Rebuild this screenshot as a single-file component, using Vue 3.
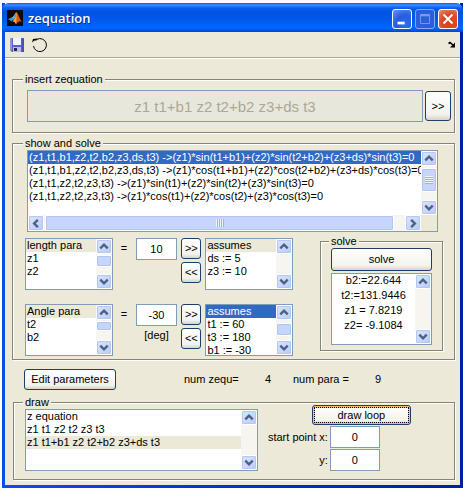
<script setup>
import { h, ref } from 'vue'

const chevrons = {
  up: 'M4 10 8 6l4 4',
  down: 'M4 6 8 10l4-4',
  left: 'M10 4 6 8l4 4',
  right: 'M6 4 10 8l-4 4',
}

const arrow = (dir) =>
  h('button', { type: 'button', class: 'lb-arrow', 'aria-label': `Scroll ${dir}` }, [
    h('svg', { viewBox: '1 1 14 14' }, [h('path', { d: chevrons[dir] })]),
  ])

// track = [space before, thumb length, space after]
const bar = (track, axis) =>
  h('div', { class: ['lb-bar', `lb-bar-${axis}`] }, [
    arrow(axis === 'y' ? 'up' : 'left'),
    h('div', { class: 'lb-track' }, track
      ? [
          h('i', { style: { flexGrow: track[0] } }),
          h('i', { class: ['lb-thumb', { 'lb-grip': track[1] > 20 }], style: { flexGrow: track[1] } }),
          h('i', { style: { flexGrow: track[2] } }),
        ]
      : []),
    arrow(axis === 'y' ? 'down' : 'right'),
  ])

const ListBox = (props) =>
  h('div', { class: ['lb', `lb-${props.tone}`] }, [
    h('div', { class: 'lb-main' }, [
      h('select', { size: 4, 'aria-label': props.label },
        props.items.map((text, i) => h('option', { selected: i === props.selected }, text))),
      bar(props.track, 'y'),
    ]),
    props.trackX ? h('div', { class: 'lb-foot' }, [bar(props.trackX, 'x')]) : null,
  ])
ListBox.props = ['items', 'selected', 'tone', 'track', 'trackX', 'label']

const zequation = ref('z1 t1+b1 z2 t2+b2 z3+ds t3')
const lengthValue = ref('10')
const angleValue = ref('-30')
const startX = ref('0')
const startY = ref('0')

const equations = [
  '(z1,t1,b1,z2,t2,b2,z3,ds,t3) ->(z1)*sin(t1+b1)+(z2)*sin(t2+b2)+(z3+ds)*sin(t3)=0',
  '(z1,t1,b1,z2,t2,b2,z3,ds,t3) ->(z1)*cos(t1+b1)+(z2)*cos(t2+b2)+(z3+ds)*cos(t3)=0',
  '(z1,t1,z2,t2,z3,t3) ->(z1)*sin(t1)+(z2)*sin(t2)+(z3)*sin(t3)=0',
  '(z1,t1,z2,t2,z3,t3) ->(z1)*cos(t1)+(z2)*cos(t2)+(z3)*cos(t3)=0',
]
const lengthPara = ['length para', 'z1', 'z2']
const lengthAssumes = ['assumes', 'ds := 5', 'z3 := 10']
const anglePara = ['Angle para', 't2', 'b2']
const angleAssumes = ['assumes', 't1 := 60', 't3 := 180', 'b1 := -30']
const solution = ['b2:=22.644', 't2:=131.9446', 'z1 = 7.8219', 'z2= -9.1084']
const loops = ['z equation', 'z1 t1 z2 t2 z3 t3', 'z1 t1+b1 z2 t2+b2 z3+ds t3']
</script>

<template>
  <div class="window">
    <header class="title">
      <svg class="logo" viewBox="0 0 16 16" aria-hidden="true">
        <rect width="16" height="16" fill="#0b0a12" />
        <path d="M1 9 4.500 7.500 6.500 9.500 4.500 11.500Z" fill="#3c8fc4" />
        <path d="M4.500 7.500C7 6.500 7.500 3.500 9.500 2L8.500 7 6.500 10Z" fill="#5fb0d0" />
        <path d="M9.500 2C11 3 12 8 15 12 13 10.500 11.500 11 9 14.500 8.500 12.500 7.500 11.500 5.500 12L8 8Z" fill="#d9541a" />
        <path d="M9.500 2C10 5 9.500 9 9 14.500 8.500 12.500 7.500 11.500 6 11.500L8.500 7Z" fill="#f7a63a" />
      </svg>
      <h1>zequation</h1>
      <button type="button" class="cap" aria-label="Minimize">
        <svg viewBox="0 0 20 20"><rect x="5" y="13" width="8" height="3" fill="#fff" /></svg>
      </button>
      <button type="button" class="cap dim" aria-label="Maximize">
        <svg viewBox="0 0 20 20"><path d="M5 5h10v10H5z" fill="none" stroke="#7d9bee" /><path d="M5 6h10" stroke="#7d9bee" stroke-width="2" /></svg>
      </button>
      <button type="button" class="cap close" aria-label="Close">
        <svg viewBox="0 0 20 20"><path d="m5 5 10 10m0-10-10 10" stroke="#fff" stroke-width="2.200" /></svg>
      </button>
    </header>

    <div class="toolbar">
      <button type="button" class="tool" aria-label="Save">
        <svg viewBox="0 0 16 16">
          <path d="M1 1h14v14H3l-2-2z" fill="#5a5fc0" />
          <path d="M1 1h2v12H1z" fill="#8c95e0" />
          <path d="M13 2h2v13h-2z" fill="#4a50ac" />
          <path d="M4 1h8v7H4z" fill="#eef3ff" />
          <path d="M4 10h8v5H4z" fill="#b9bfd8" />
          <path d="M5 11h3v3H5z" fill="#22265c" />
        </svg>
      </button>
      <button type="button" class="tool" aria-label="Rotate">
        <svg viewBox="0 0 16 16">
          <path d="M1.500 9A6.500 6.500 0 1 0 5 2.300" fill="none" stroke="#000" />
          <path d="M0 5.500 1 2l4.500-.500L4.500 3.500 2.500 3.500Z" fill="#000" />
        </svg>
      </button>
      <svg class="dock" viewBox="0 0 8 8" aria-hidden="true">
        <path d="M0.500 2.500 2 1.500 5.500 4.500" fill="none" stroke="#000" stroke-width="1.600" />
        <path d="M7 1.500V6.500H2z" fill="#000" />
      </svg>
    </div>

    <main>
      <fieldset>
        <legend>insert zequation</legend>
        <div class="insert">
          <input v-model="zequation" class="big" disabled aria-label="zequation" />
          <button type="button" class="btn">&gt;&gt;</button>
        </div>
      </fieldset>

      <fieldset class="show">
        <legend>show and solve</legend>
        <div class="equations">
          <ListBox label="equations" :items="equations" :selected="0" tone="blue" :track="[2, 24, 8]" :track-x="[1, 348, 11]" />
        </div>
        <div class="params">
          <div class="rows">
            <div class="row">
              <ListBox label="length parameters" :items="lengthPara" :selected="0" tone="beige" :track="[1, 11, 7]" />
              <label for="len" class="eq">=</label>
              <div class="value"><input id="len" v-model="lengthValue" /></div>
              <div class="pair">
                <button type="button" class="btn">&gt;&gt;</button>
                <button type="button" class="btn">&lt;&lt;</button>
              </div>
              <ListBox label="length assumes" :items="lengthAssumes" :selected="0" tone="beige" />
            </div>
            <div class="row">
              <ListBox label="angle parameters" :items="anglePara" :selected="0" tone="beige" :track="[1, 9, 9]" />
              <label for="ang" class="eq">=</label>
              <div class="value"><input id="ang" v-model="angleValue" /><span>[deg]</span></div>
              <div class="pair">
                <button type="button" class="btn">&gt;&gt;</button>
                <button type="button" class="btn">&lt;&lt;</button>
              </div>
              <ListBox label="angle assumes" :items="angleAssumes" :selected="0" tone="blue" :track="[3, 12, 4]" />
            </div>
          </div>
          <fieldset class="solve">
            <legend>solve</legend>
            <button type="button" class="btn">solve</button>
            <ListBox class="centered" label="solution" :items="solution" :selected="-1" tone="none" />
          </fieldset>
        </div>
      </fieldset>

      <div class="summary">
        <button type="button" class="btn">Edit parameters</button>
        <span>num zequ=</span><span>4</span>
        <span>num para =</span><span>9</span>
      </div>

      <fieldset class="draw">
        <legend>draw</legend>
        <div class="drawing">
          <ListBox label="loops" :items="loops" :selected="2" tone="beige" />
          <div class="start">
            <button type="button" class="btn focus">draw loop</button>
            <label for="sx">start point x:</label><input id="sx" v-model="startX" />
            <label for="sy">y:</label><input id="sy" v-model="startY" />
          </div>
        </div>
      </fieldset>
    </main>
  </div>
</template>

<style>
body {
  background: #fdfefd;
}

.lb {
  display: flex;
  flex-direction: column;
  box-sizing: border-box;
  min-width: 0;
  border: 1px solid #7f9db9;
  background: #fff;
}
.lb-main {
  display: flex;
  flex: 1;
  min-height: 0;
}
.lb select {
  flex: 1;
  width: 0;
  min-width: 0;
  height: 100%;
  margin: 0;
  padding: 0;
  border: 0;
  border-radius: 0;
  outline: 0;
  overflow: hidden;
  background: #fff;
  font: 11px/13px "Liberation Sans", Arial, sans-serif;
  color: #000;
}
.lb option {
  height: 13px;
  min-height: 13px;
  padding: 0 1px;
  line-height: 13px;
  white-space: pre;
}
.lb-blue option:checked {
  background: linear-gradient(#316ac5, #316ac5);
  -webkit-text-fill-color: #fff;
}
.lb-beige option:checked {
  background: linear-gradient(#ece9d8, #ece9d8);
  -webkit-text-fill-color: #000;
}
.lb-none option:checked {
  background: linear-gradient(#fff, #fff);
  -webkit-text-fill-color: #000;
}
.lb-foot {
  padding-right: 16px;
  background: #ece9d8;
}
.lb-bar {
  display: flex;
  flex: none;
  background: #f6f5f0;
}
.lb-bar-y {
  flex-direction: column;
  width: 16px;
}
.lb-bar-x {
  height: 16px;
}
.lb-arrow {
  flex: none;
  box-sizing: border-box;
  width: 16px;
  height: 15px;
  padding: 0;
  border: 1px solid #fff;
  border-radius: 2px;
  background: linear-gradient(135deg, #dbe5fe, #b8cbf8);
  box-shadow: inset 0 0 0 1px #b5c8f5;
}
.lb-bar-x .lb-arrow {
  height: 16px;
}
.lb-arrow svg {
  display: block;
  width: 14px;
  height: 13px;
}
.lb-arrow path {
  fill: none;
  stroke: #4d6185;
  stroke-width: 2.6;
}
.lb-track {
  display: flex;
  flex: 1;
  min-height: 0;
}
.lb-bar-y .lb-track {
  flex-direction: column;
}
.lb-track i {
  flex-basis: 0;
}
.lb-thumb {
  display: flex;
  box-sizing: border-box;
  align-items: center;
  justify-content: center;
  border: 1px solid #fff;
  border-radius: 2px;
  background: #c5d5fd;
  box-shadow: inset 0 0 0 1px #b2c5f3;
}
.lb-grip::after {
  content: "";
  width: 8px;
  height: 8px;
  background: repeating-linear-gradient(#eef4fe 0 1px, #9cb3ea 1px 2px);
}
.lb-bar-x .lb-grip::after {
  background: repeating-linear-gradient(90deg, #eef4fe 0 1px, #9cb3ea 1px 2px);
}
.centered select {
  text-align: center;
}
.centered option {
  height: 15px;
  padding: 0;
  line-height: 15px;
}
</style>

<style scoped>
.window {
  margin: 3px 2px;
  border: solid #0831d9;
  border-width: 0 3px 3px;
  border-image: linear-gradient(90deg, #0a4fe8, #0a2fc4 50%, #001fa0) 3;
  border-radius: 7px 7px 0 0;
  background: #ece9d8;
  font: 11px/13px "Liberation Sans", Arial, sans-serif;
  color: #000;
}
button,
input {
  box-sizing: border-box;
  margin: 0;
  padding: 0;
  font: inherit;
  color: #000;
}
.title {
  display: flex;
  align-items: center;
  gap: 3px;
  height: 29px;
  margin: 0 -3px;
  padding: 0 5px;
  box-sizing: border-box;
  border-radius: 7px 7px 0 0;
  background: linear-gradient(#0a5be6 0, #3a8cff 2px, #0a5ff0 5px, #0053e0 9px, #0058ea 16px, #0066ff 24px, #0062f8 26px, #0045c8 29px);
}
.logo {
  width: 16px;
  height: 16px;
}
h1 {
  flex: 1;
  margin: 0 0 0 2px;
  font: 600 13px/16px "Open Sans", "Noto Sans", sans-serif;
  color: #fff;
  text-shadow: 1px 1px 0 #0a2f94;
}
.cap {
  width: 20px;
  height: 20px;
  margin-top: 2px;
  border: 1px solid #fff;
  border-radius: 3px;
  background: radial-gradient(circle at 70% 80%, #2a6cf4, #2a5ce0 50%, #6b95f5);
}
.cap svg {
  display: block;
  width: 18px;
  height: 18px;
}
.dim {
  border-color: #88a8f2;
  background: #2a5ee0;
}
.close {
  background: radial-gradient(circle at 60% 70%, #e2431c, #dc4a26 50%, #f08f72);
}
.toolbar {
  display: flex;
  align-items: center;
  gap: 7px;
  height: 25px;
  padding: 0 4px;
  border-bottom: 1px solid #aca899;
  box-shadow: 0 1px 0 #fff;
}
.tool {
  width: 16px;
  height: 16px;
  border: 0;
  background: none;
}
.tool svg {
  display: block;
  width: 16px;
  height: 16px;
}
.dock {
  width: 8px;
  height: 8px;
  margin-left: auto;
}
main {
  padding: 14px 5px 5px 7px;
}
fieldset {
  min-width: 0;
  margin: 0 0 3px;
  padding: 0 16px 3px 12px;
  border: 1px solid #858478;
  box-shadow: 1px 1px 0 #fff, inset 1px 1px 0 #fff;
}
legend {
  margin-left: -2px;
  padding: 0 2px;
  background: #ece9d8;
  line-height: 14px;
}
input {
  width: 100%;
  height: 22px;
  border: 1px solid #7f9db9;
  border-radius: 0;
  background: #fff;
  text-align: center;
}
.btn {
  height: 21px;
  border: 1px solid #1d3f6b;
  border-radius: 3px;
  background: linear-gradient(#fff, #f3f2ec 80%, #d8d3c6);
  white-space: nowrap;
}
.insert {
  display: flex;
  gap: 2px;
  margin-right: -13px;
  padding: 4px 0 7px 2px;
}
.insert .big {
  flex: 1;
  height: 32px;
  background: #e8e7dc;
  font-size: 15px;
  color: #aca899;
}
.insert .btn {
  align-self: center;
  width: 26px;
  height: 30px;
}
.equations {
  padding-left: 2px;
}
.equations .lb {
  height: 82px;
}
.params {
  display: flex;
  align-items: flex-start;
  gap: 27px;
  margin-right: -5px;
  padding-top: 2px;
}
.rows {
  display: flex;
  flex: 268;
  flex-direction: column;
  gap: 14px;
  padding-top: 4px;
}
.row {
  display: grid;
  grid-template-columns: 88fr 15fr 42fr 20px 88fr;
  column-gap: 4px;
  align-items: start;
}
.row .eq {
  padding-top: 4px;
  text-align: center;
}
.row .lb {
  height: 52px;
}
.value {
  display: flex;
  flex-direction: column;
  gap: 3px;
  text-align: center;
}
.pair {
  display: flex;
  flex-direction: column;
  gap: 3px;
}
.solve {
  flex: 101;
  padding: 0 10px 5px;
}
.solve .btn {
  width: 100%;
  height: 23px;
}
.solve .lb {
  height: 72px;
  margin-top: 2px;
}
.summary {
  display: grid;
  grid-template-columns: 92px 68fr 81fr 28fr 82fr 80fr;
  align-items: center;
  padding: 6px 0 5px 12px;
  white-space: nowrap;
}
.summary span:nth-of-type(1) {
  grid-column: 3;
}
.draw {
  margin: 0 0 0 1px;
  padding: 0 12px 8px 11px;
}
.drawing {
  display: flex;
  gap: 10px;
}
.drawing .lb {
  flex: 232;
  height: 62px;
}
.start {
  display: grid;
  flex: 175;
  grid-template-columns: 60px 50px 1fr;
  gap: 1px 2px;
  align-items: center;
  align-content: start;
  margin-top: -4px;
}
.start .btn {
  grid-column: 1 / -1;
  width: 99px;
  height: 20px;
  margin-left: 44px;
}
.start label {
  grid-column: 1;
  text-align: right;
  white-space: nowrap;
}
.focus {
  outline: 1px dotted #000;
  outline-offset: -3px;
  box-shadow: inset 0 0 0 2px #f4c05a;
}
</style>
